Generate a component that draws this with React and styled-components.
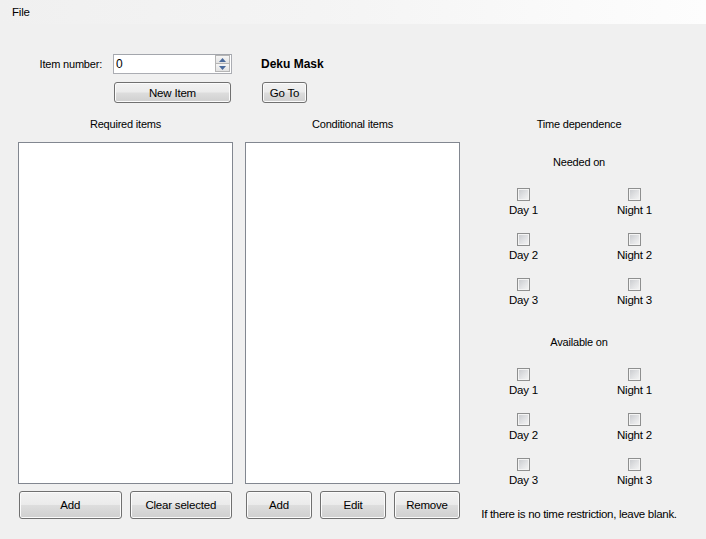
import styled, { createGlobalStyle } from "styled-components";

const GlobalStyle = createGlobalStyle`
  html, body {
    margin: 0;
    padding: 0;
    background: #f0f0f0;
  }
  body {
    font-family: "Liberation Sans", Arial, sans-serif;
    font-size: 11px;
    letter-spacing: -0.2px;
    color: #000;
  }
`;

const Window = styled.div`
  width: 706px;
  height: 539px;
  overflow: hidden;
  background: #f0f0f0;
`;

const MenuBar = styled.div`
  height: 24px;
  display: flex;
  align-items: center;
  padding-left: 9px;
  background: linear-gradient(to right, #f0f0f0 0%, #f4f4f4 45%, #fdfdfd 100%);
`;

const MenuItem = styled.span`
  padding: 1px 3px 0;
  font-size: 11.5px;
  line-height: 23px;
`;

const Body = styled.div`
  padding-top: 30px;
`;

const TopRow = styled.div`
  display: flex;
  align-items: center;
  height: 20px;
`;

const FieldLabel = styled.label`
  width: 102px;
  margin-right: 11px;
  text-align: right;
`;

const Spin = styled.div`
  position: relative;
  width: 119px;
  height: 20px;
  box-sizing: border-box;
  border: 1px solid #abadb3;
  border-top-color: #a3a6ac;
  background: #fff;
  display: flex;
`;

const SpinText = styled.input`
  flex: 1;
  min-width: 0;
  border: 0;
  outline: none;
  padding: 0 2px;
  font: inherit;
  font-size: 12px;
  background: transparent;
`;

const SpinButtons = styled.div`
  width: 15px;
  display: flex;
  flex-direction: column;
  margin: 0 1px 1px 0;
`;

const SpinButton = styled.div`
  flex: 1;
  display: flex;
  align-items: center;
  justify-content: center;
  border: 1px solid #b5b5b5;
  border-top-width: ${(p) => (p.$down ? "0" : "1px")};
  background: linear-gradient(#f6f6f6, #e2e2e2);
`;

const ItemTitle = styled.span`
  margin-left: 29px;
  font-weight: bold;
  font-size: 12px;
  letter-spacing: 0;
`;

const ActionRow = styled.div`
  display: flex;
  margin-top: 8px;
  padding-left: 114px;
  gap: 31px;
`;

const Button = styled.button`
  box-sizing: border-box;
  width: ${(p) => p.$w || "auto"};
  height: ${(p) => p.$h || "22px"};
  flex: ${(p) => (p.$grow ? 1 : "none")};
  padding: 0;
  border: 1px solid #707070;
  border-radius: 3px;
  box-shadow: inset 0 0 0 1px #fbfbfb;
  background: linear-gradient(#f2f2f2 0%, #ebebeb 48%, #dddddd 52%, #cfcfcf 100%);
  font-family: "Liberation Sans", Arial, sans-serif;
  font-size: 11.5px;
  letter-spacing: -0.2px;
  color: #000;
`;

const Columns = styled.div`
  display: flex;
  margin-top: 12px;
  padding-left: 18px;
`;

const ListColumn = styled.div`
  width: 215px;
  margin-left: ${(p) => p.$offset || "0"};
  display: flex;
  flex-direction: column;
`;

const ColumnHeader = styled.div`
  height: 26px;
  padding-top: 1px;
  line-height: 16px;
  text-align: center;
`;

const ListBox = styled.div`
  height: 342px;
  box-sizing: border-box;
  border: 1px solid #828790;
  background: #fff;
`;

const ButtonRow = styled.div`
  display: flex;
  gap: 8px;
  margin-top: 7px;
  padding: 0 ${(p) => p.$right || "1px"} 0 1px;
`;

const TimeColumn = styled.div`
  width: 222px;
  margin-left: 8px;
  display: flex;
  flex-direction: column;
  text-align: center;
`;

const SubHeader = styled.div`
  margin-top: ${(p) => p.$top};
  line-height: 16px;
`;

const CheckGrid = styled.div`
  display: grid;
  grid-template-columns: 111px 111px;
  row-gap: 15px;
  margin-top: ${(p) => p.$top};
`;

const CheckCell = styled.label`
  display: flex;
  flex-direction: column;
  align-items: center;
  font-size: 11.5px;
  line-height: 16px;
`;

const Box = styled.input`
  appearance: none;
  margin: 0 0 1px;
  width: 13px;
  height: 13px;
  box-sizing: border-box;
  border: 1px solid #8e8f8f;
  box-shadow: inset 0 0 0 1px #f4f4f4;
  background: linear-gradient(135deg, #c6c8cc 0%, #e2e3e5 55%, #f6f6f6 100%);
`;

const Note = styled.div`
  margin-top: 18px;
  line-height: 16px;
  font-size: 11.5px;
  letter-spacing: -0.3px;
`;

const Arrow = ({ up }) => (
  <svg width="7" height="4" viewBox="0 0 7 4">
    <path d={up ? "M0 4 L3.5 0 L7 4 Z" : "M0 0 L3.5 4 L7 0 Z"} fill="#4a6a9c" />
  </svg>
);

const slots = ["Day 1", "Night 1", "Day 2", "Night 2", "Day 3", "Night 3"];

const TimeGroup = ({ name, top }) => (
  <CheckGrid $top={top}>
    {slots.map((s) => (
      <CheckCell key={name + s}>
        <Box type="checkbox" />
        {s}
      </CheckCell>
    ))}
  </CheckGrid>
);

export default function App() {
  return (
    <Window>
      <GlobalStyle />
      <MenuBar>
        <MenuItem>File</MenuItem>
      </MenuBar>
      <Body>
        <TopRow>
          <FieldLabel>Item number:</FieldLabel>
          <Spin>
            <SpinText defaultValue="0" />
            <SpinButtons>
              <SpinButton>
                <Arrow up />
              </SpinButton>
              <SpinButton $down>
                <Arrow />
              </SpinButton>
            </SpinButtons>
          </Spin>
          <ItemTitle>Deku Mask</ItemTitle>
        </TopRow>
        <ActionRow>
          <Button $w="117px" $h="21px">New Item</Button>
          <Button $w="45px" $h="21px">Go To</Button>
        </ActionRow>
        <Columns>
          <ListColumn>
            <ColumnHeader>Required items</ColumnHeader>
            <ListBox />
            <ButtonRow>
              <Button $grow $h="28px">Add</Button>
              <Button $grow $h="28px">Clear selected</Button>
            </ButtonRow>
          </ListColumn>
          <ListColumn $offset="12px">
            <ColumnHeader>Conditional items</ColumnHeader>
            <ListBox />
            <ButtonRow $right="0">
              <Button $grow $h="28px">Add</Button>
              <Button $grow $h="28px">Edit</Button>
              <Button $grow $h="28px">Remove</Button>
            </ButtonRow>
          </ListColumn>
          <TimeColumn>
            <ColumnHeader>Time dependence</ColumnHeader>
            <SubHeader $top="12px">Needed on</SubHeader>
            <TimeGroup name="needed" top="18px" />
            <SubHeader $top="26px">Available on</SubHeader>
            <TimeGroup name="available" top="18px" />
            <Note>If there is no time restriction, leave blank.</Note>
          </TimeColumn>
        </Columns>
      </Body>
    </Window>
  );
}
